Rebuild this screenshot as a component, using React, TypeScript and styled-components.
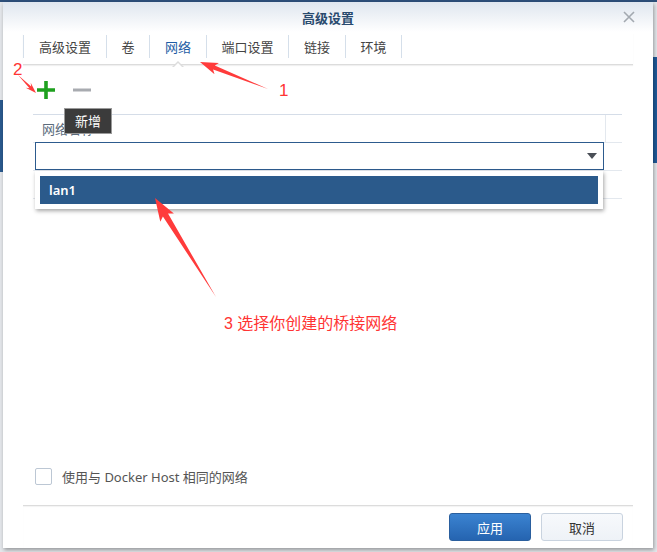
import React from 'react';
import styled, { createGlobalStyle } from 'styled-components';

const GlobalStyle = createGlobalStyle`
  html, body {
    margin: 0;
    padding: 0;
  }
  body {
    width: 657px;
    height: 552px;
    overflow: hidden;
    font-family: "Noto Sans", "Noto Sans CJK SC", sans-serif;
    background:
      linear-gradient(#1f5a99, #1f5a99) 653px 57px / 4px 106px no-repeat,
      linear-gradient(#2a5a8f, #2a5a8f) 0 100px / 3px 72px no-repeat,
      linear-gradient(#2d4f7a, #2d4f7a) 0 0 / 100% 2px no-repeat,
      #e4e7eb;
  }
`;

const Page = styled.div`
  position: relative;
  padding: 2px 4px 0 3px;
`;

const Dialog = styled.div`
  width: 650px;
  height: 546px;
  background: #ffffff;
  display: flex;
  flex-direction: column;
  box-shadow: 1px 2px 4px rgba(0, 0, 0, 0.35);
`;

const Header = styled.div`
  height: 30px;
  display: grid;
  grid-template-columns: 1fr auto 1fr;
  align-items: center;
  background: linear-gradient(#dfe6ef, #ffffff);
`;

const Title = styled.div`
  font-size: 13px;
  font-weight: 700;
  color: #294a6e;
`;

const Close = styled.div`
  justify-self: end;
  margin-right: 18px;
  display: flex;
`;

const TabBar = styled.div`
  display: flex;
  margin: 1px 20px 0;
  height: 31px;
  border-bottom: 1px solid #dcdcdc;
  box-shadow: 0 1px 1px rgba(0, 0, 0, 0.06);
`;

const Tab = styled.div<{ $active?: boolean }>`
  position: relative;
  height: 23px;
  margin-top: 2px;
  padding: 0 14.5px 0 15px;
  display: flex;
  align-items: center;
  font-size: 13px;
  color: ${(p) => (p.$active ? '#1f5da5' : '#444')};
  border-left: 1px solid #d5dfea;

  &:last-child {
    border-right: 1px solid #d5dfea;
  }

  ${(p) =>
    p.$active &&
    `
    &::after {
      content: '';
      position: absolute;
      left: 50%;
      bottom: -9px;
      margin-left: -6px;
      border: 6px solid transparent;
      border-bottom: 6px solid #dcdcdc;
      border-top: none;
    }
    &::before {
      content: '';
      position: absolute;
      left: 50%;
      bottom: -10px;
      margin-left: -5px;
      border: 5px solid transparent;
      border-bottom: 5px solid #ffffff;
      border-top: none;
      z-index: 1;
    }
  `}
`;

const Body = styled.div`
  flex: 1;
  display: flex;
  flex-direction: column;
  padding: 0 20px;
`;

const Toolbar = styled.div`
  height: 49px;
  display: flex;
  align-items: center;
  gap: 16px;
  padding-left: 13px;
`;

const ToolButton = styled.div`
  position: relative;
  width: 20px;
  height: 20px;
  display: flex;
`;

const Tooltip = styled.div`
  position: absolute;
  left: 28px;
  top: 28px;
  padding: 2px 10px 3px;
  background: #3b3b3b;
  border: 1px solid #9a9a9a;
  color: #ffffff;
  font-size: 13px;
  white-space: nowrap;
  z-index: 5;
`;

const Table = styled.div`
  margin: 0 11px 0 10px;
  border-top: 1px solid #d5dde8;
`;

const HeaderRow = styled.div`
  display: grid;
  grid-template-columns: 1fr 16px;
  height: 27px;
  border-bottom: 1px solid #e3e8ee;
`;

const HeaderCell = styled.div`
  display: flex;
  align-items: center;
  padding-left: 9px;
  font-size: 13px;
  color: #5b6b7c;
  border-right: 1px solid #e3e8ee;

  &:last-child {
    border-right: none;
  }
`;

const Row = styled.div`
  position: relative;
  height: 27px;
  border-bottom: 1px solid #e3e8ee;
`;

const SelectBox = styled.div`
  position: absolute;
  left: 2px;
  top: -1px;
  width: 563px;
  height: 26px;
  border: 1px solid #2d5b8e;
  background: #ffffff;
  display: flex;
  align-items: center;
  justify-content: flex-end;
  padding-right: 4px;
  box-sizing: content-box;
  z-index: 2;
`;

const Caret = styled.div`
  width: 0;
  height: 0;
  border-left: 5px solid transparent;
  border-right: 5px solid transparent;
  border-top: 6px solid #4a4f57;
  margin-right: 2px;
`;

const Dropdown = styled.div`
  position: absolute;
  left: 2px;
  top: 28px;
  width: 558px;
  padding: 5px;
  background: #ffffff;
  box-shadow: 1px 2px 4px rgba(0, 0, 0, 0.35);
  z-index: 3;
`;

const Option = styled.div`
  height: 28px;
  display: flex;
  align-items: center;
  padding-left: 9px;
  background: #2b5a8b;
  color: #ffffff;
  font-size: 13px;
  font-weight: 600;
`;

const CheckRow = styled.div`
  margin-top: auto;
  margin-bottom: 19px;
  display: flex;
  align-items: center;
  gap: 10px;
  padding-left: 12px;
`;

const CheckBox = styled.div`
  width: 15px;
  height: 15px;
  border: 1px solid #bcc7d4;
  border-radius: 2px;
  background: #ffffff;
`;

const CheckLabel = styled.span`
  font-size: 13px;
  color: #555;
`;

const Footer = styled.div`
  box-sizing: border-box;
  margin: 0 20px;
  height: 43px;
  flex-shrink: 0;
  border-top: 1px solid #dcdcdc;
  box-shadow: inset 0 1px 1px rgba(0, 0, 0, 0.05);
  display: flex;
  justify-content: flex-end;
  align-items: flex-start;
  gap: 10px;
  padding: 7px 10px 0 0;
`;

const Button = styled.div<{ $primary?: boolean }>`
  width: 80px;
  height: 26px;
  border-radius: 3px;
  display: flex;
  align-items: center;
  justify-content: center;
  font-size: 13px;
  color: ${(p) => (p.$primary ? '#ffffff' : '#333')};
  border: 1px solid ${(p) => (p.$primary ? '#2a5f9e' : '#c9d3df')};
  background: ${(p) =>
    p.$primary
      ? 'linear-gradient(#3b83d1, #2564b0)'
      : 'linear-gradient(#f7f9fc, #eef2f7)'};
`;

const Annotations = styled.svg`
  position: absolute;
  left: 0;
  top: 0;
  pointer-events: none;
  z-index: 10;
`;

const Note = styled.div<{ $size: number }>`
  position: absolute;
  color: #ff3434;
  font-size: ${(p) => p.$size}px;
  font-family: "Liberation Sans", "Noto Sans CJK SC", sans-serif;
  line-height: 1;
  white-space: nowrap;
  z-index: 10;
`;

type Pt = [number, number];

// tapering red callout arrow, thin at the tail, barbed head at the tip
const arrowPoints = (tail: Pt, tip: Pt, head: number, shaft: number, barb: number) => {
  const dx = tip[0] - tail[0];
  const dy = tip[1] - tail[1];
  const len = Math.hypot(dx, dy);
  const ux = dx / len;
  const uy = dy / len;
  const nx = -uy;
  const ny = ux;
  const bx = tip[0] - ux * head;
  const by = tip[1] - uy * head;
  const back = 3;
  const pts: Pt[] = [
    tail,
    [bx + nx * shaft, by + ny * shaft],
    [bx - ux * back + nx * barb, by - uy * back + ny * barb],
    tip,
    [bx - ux * back - nx * barb, by - uy * back - ny * barb],
    [bx - nx * shaft, by - ny * shaft],
  ];
  return pts.map((p) => p.map((v) => v.toFixed(1)).join(',')).join(' ');
};

const tabs = ['高级设置', '卷', '网络', '端口设置', '链接', '环境'];

export default function App() {
  return (
    <>
      <GlobalStyle />
      <Page>
        <Dialog>
          <Header>
            <span />
            <Title>高级设置</Title>
            <Close>
              <svg width="12" height="12" viewBox="0 0 12 12">
                <path d="M1 1L11 11M11 1L1 11" stroke="#a3a9b0" strokeWidth="1.6" />
              </svg>
            </Close>
          </Header>

          <TabBar>
            {tabs.map((t) => (
              <Tab key={t} $active={t === '网络'}>
                {t}
              </Tab>
            ))}
          </TabBar>

          <Body>
            <Toolbar>
              <ToolButton>
                <svg width="20" height="20" viewBox="0 0 20 20">
                  <path d="M10 1V19M1 10H19" stroke="#1ea01e" strokeWidth="3.6" />
                </svg>
                <Tooltip>新增</Tooltip>
              </ToolButton>
              <ToolButton>
                <svg width="20" height="20" viewBox="0 0 20 20">
                  <path d="M1 10H19" stroke="#a8abb0" strokeWidth="3" />
                </svg>
              </ToolButton>
            </Toolbar>

            <Table>
              <HeaderRow>
                <HeaderCell>网络名称</HeaderCell>
                <HeaderCell />
              </HeaderRow>
              <Row>
                <SelectBox>
                  <Caret />
                </SelectBox>
                <Dropdown>
                  <Option>lan1</Option>
                </Dropdown>
              </Row>
              <Row />
            </Table>

            <CheckRow>
              <CheckBox />
              <CheckLabel>使用与 Docker Host 相同的网络</CheckLabel>
            </CheckRow>
          </Body>

          <Footer>
            <Button $primary>应用</Button>
            <Button>取消</Button>
          </Footer>
        </Dialog>

        <Annotations width="657" height="552">
          <polygon points={arrowPoints([268, 89], [200, 62], 15, 2.2, 6)} fill="#ff3b3b" />
          <polygon points={arrowPoints([18, 75], [36, 93], 8, 1.2, 3.5)} fill="#ff3b3b" />
          <polygon points={arrowPoints([216, 297], [155, 198], 20, 3, 8)} fill="#ff3b3b" />
        </Annotations>
        <Note $size={17} style={{ left: 279, top: 82 }}>1</Note>
        <Note $size={17} style={{ left: 13, top: 61 }}>2</Note>
        <Note $size={16} style={{ left: 224, top: 316 }}>3 选择你创建的桥接网络</Note>
      </Page>
    </>
  );
}
